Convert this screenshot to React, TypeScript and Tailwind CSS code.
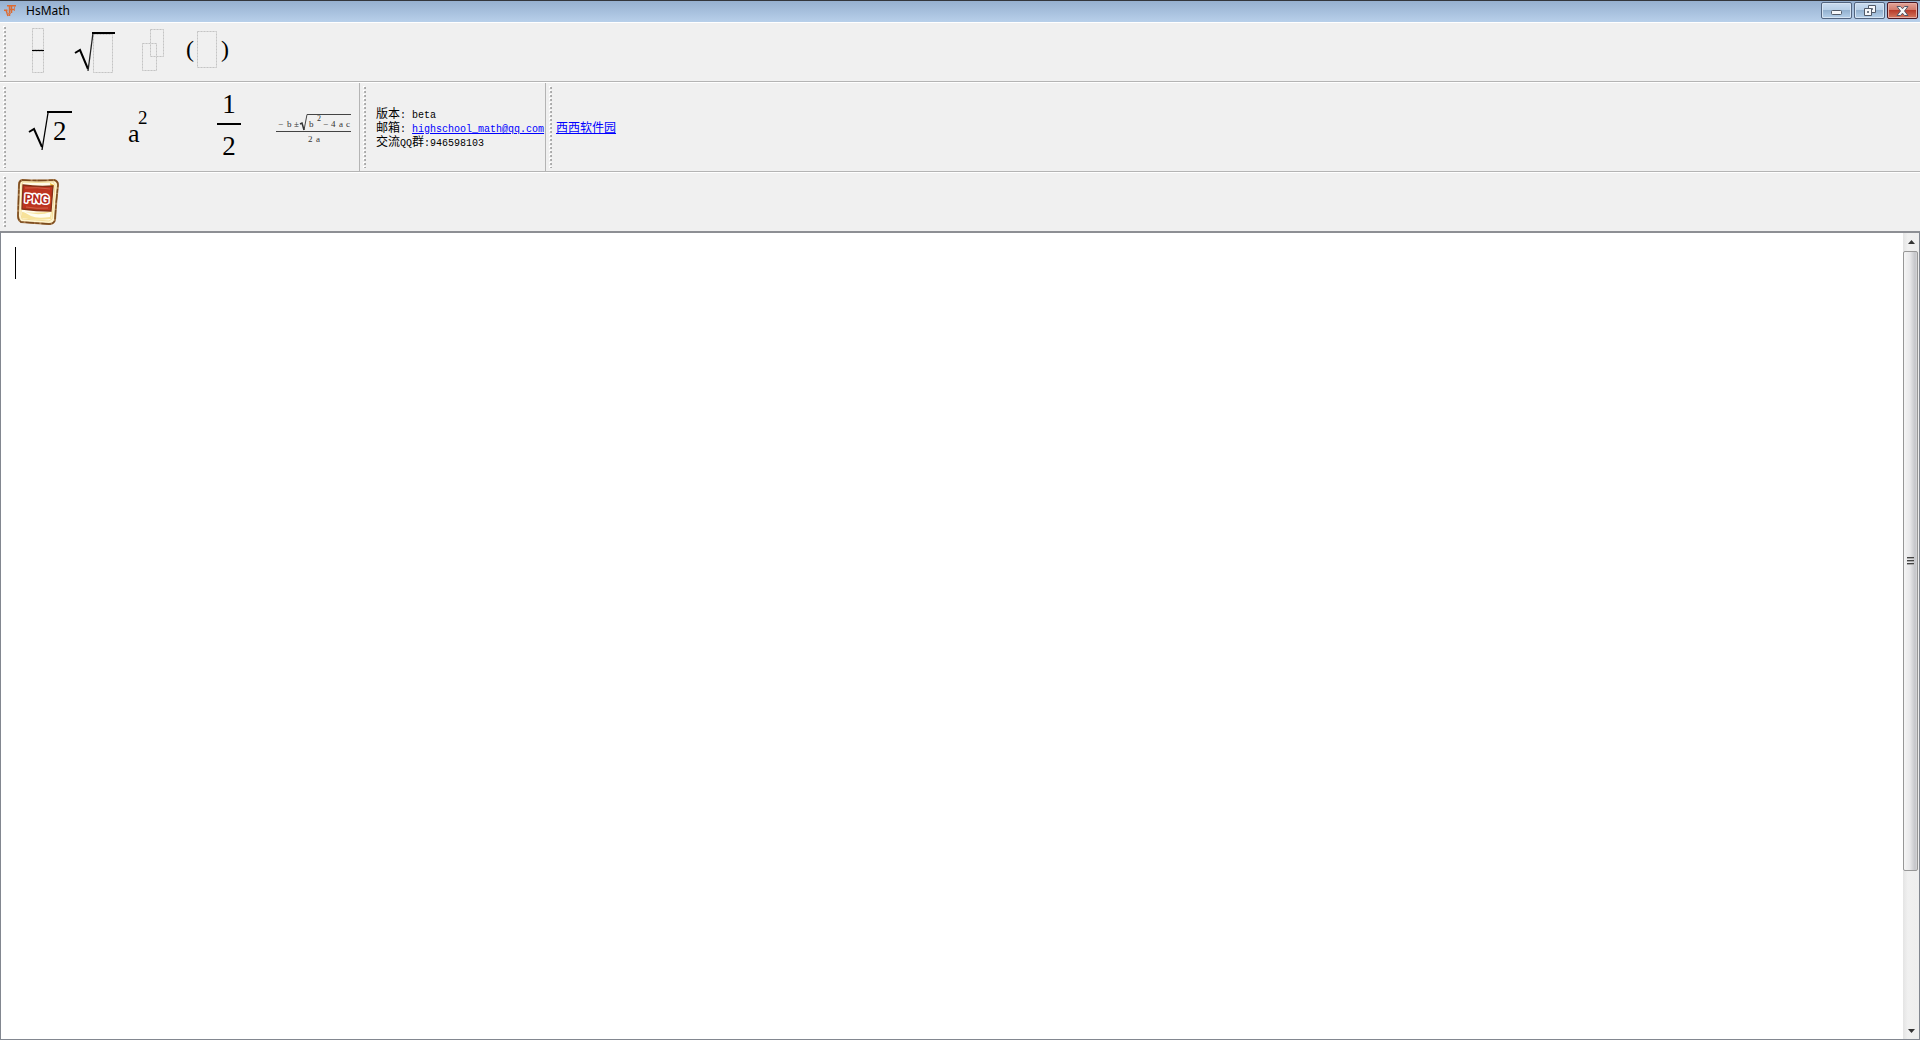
import type { ReactNode } from "react";

function Grip() {
  return (
    <div className="flex shrink-0 self-stretch py-[3px] pl-[3px]" aria-hidden="true">
      <span className="w-px bg-[repeating-linear-gradient(to_bottom,#fff_0_2px,transparent_2px_4px)]" />
      <span className="w-px bg-[repeating-linear-gradient(to_bottom,#fff_0_1px,#b4b4b4_1px_3px,transparent_3px_4px)]" />
      <span className="w-px bg-[repeating-linear-gradient(to_bottom,transparent_0_1px,#a9a9a9_1px_3px,transparent_3px_4px)]" />
    </div>
  );
}

function ToolButton({ label, className, children }: { label: string; className: string; children: ReactNode }) {
  return (
    <button type="button" aria-label={label} title={label} className={`flex shrink-0 items-center justify-center ${className}`}>
      {children}
    </button>
  );
}

function Slot({ x, y, w, h }: { x: number; y: number; w: number; h: number }) {
  return (
    <g fill="none">
      <rect x={x + 0.5} y={y + 0.5} width={w} height={h} stroke="#e6e6e6" />
      <rect x={x + 0.5} y={y + 0.5} width={w} height={h} stroke="#c4c4c4" strokeDasharray="2 1" />
    </g>
  );
}

const serif = "font-['Liberation_Serif',serif]";

function TitleBar() {
  const frame = "flex h-[17px] w-[31px] items-center justify-center rounded-xs border";
  const pale =
    "border-[#52647f] bg-[linear-gradient(to_bottom,#cadcf0_0,#b7cfe7_45%,#93b1cf_50%,#b5d0ea_100%)] shadow-[inset_0_0_0_1px_#d5e4f3]";
  return (
    <header className="flex h-[23px] shrink-0 items-start border-t border-b border-t-[#33363c] border-b-white bg-[linear-gradient(to_bottom,#96b0d0,#b8d0ea)] pr-[2px]">
      <div className="flex h-5 items-center gap-[10px] pl-1">
        <svg width="12" height="12" viewBox="0 0 12 12" fill="none" stroke="#dc6b32" aria-hidden="true">
          <path d="M3 .8h9M0 5.200h3.500M5 4.500h6" strokeWidth="1.600" />
          <path d="M2 5l2 6M5.500 1v10M7.500 1v7" strokeWidth="1.500" />
          <path d="M10.500 1v5M3 8.500h4" stroke="#d08060" />
        </svg>
        <h1 className="font-['Noto_Sans',sans-serif] text-[12px] leading-5 text-black">HsMath</h1>
      </div>
      <div className="ml-auto flex gap-[2px] pt-px">
        <button type="button" aria-label="Minimize" className={`${frame} ${pale}`}>
          <svg width="12" height="11" viewBox="0 0 12 11">
            <rect x="0.5" y="5.5" width="10" height="4" rx="1" fill="#f5f7fa" stroke="#515a68" />
          </svg>
        </button>
        <button type="button" aria-label="Restore" className={`${frame} ${pale}`}>
          <svg width="12" height="11" viewBox="0 0 12 11" stroke="#515a68">
            <path fillRule="evenodd" d="M4.500 .5h7v7h-7zM7.500 3.500h1v1h-1z" fill="#f5f7fa" />
            <path fillRule="evenodd" d="M.5 3.500h7v7h-7zM3.500 6.500h1v1h-1z" fill="#f5f7fa" />
          </svg>
        </button>
        <button
          type="button"
          aria-label="Close"
          className={`${frame} border-[#4c1722] bg-[linear-gradient(to_bottom,#e3a499_0,#d17b6c_45%,#b83c2b_50%,#d4785f_100%)] shadow-[inset_0_0_0_1px_#e6aea4]`}
        >
          <svg width="13" height="10" viewBox="0 0 13 10">
            <path d="M1 .5h3.500l2 2.300 2-2.300H12L8.500 5 12 9.500H8.500l-2-2.300-2 2.300H1L4.500 5z" fill="#f7f7f7" stroke="#535666" strokeLinejoin="round" />
          </svg>
        </button>
      </div>
    </header>
  );
}

function TemplateBar() {
  return (
    <div role="toolbar" aria-label="Templates" className="flex h-[59px] shrink-0 border-b border-[#b4b4b4]">
      <Grip />
      <div className="flex items-center gap-2 pb-[2px] pl-[9px]">
        <ToolButton label="Fraction" className="h-12 w-12">
          <svg width="48" height="48">
            <Slot x={17} y={1} w={11} h={21} />
            <Slot x={17} y={24} w={11} h={21} />
            <path d="M17 23.500h12" stroke="#000" />
          </svg>
        </ToolButton>
        <ToolButton label="Square root" className="h-12 w-12">
          <svg width="48" height="48">
            <Slot x={22} y={7} w={19} h={38} />
            <path d="M4 26l5-3 8 19" fill="none" stroke="#000" strokeWidth="2" />
            <path d="M17 44l5-38" fill="none" stroke="#222" strokeWidth="1.300" />
            <path d="M21 6h23" stroke="#000" strokeWidth="2" />
          </svg>
        </ToolButton>
        <ToolButton label="Superscript" className="h-12 w-12">
          <svg width="48" height="48">
            <Slot x={23} y={2} w={13} h={27} />
            <Slot x={15} y={16} w={14} h={27} />
          </svg>
        </ToolButton>
        <ToolButton label="Parentheses" className="h-12 w-12">
          <svg width="48" height="48" className={serif}>
            <Slot x={14} y={4} w={19} h={36} />
            <text x="3" y="30" fontSize="24">(</text>
            <text x="38" y="30" fontSize="24">)</text>
          </svg>
        </ToolButton>
      </div>
    </div>
  );
}

function Examples() {
  return (
    <div role="toolbar" aria-label="Examples" className="flex w-[360px] border-r border-[#b4b4b4]">
      <Grip />
      <div className="flex items-center gap-2 pb-[2px] pl-[5px]">
        <ToolButton label="Root of 2" className="h-20 w-20">
          <svg width="80" height="80" className={serif}>
            <path d="M18 46l5-3 8 18" fill="none" stroke="#000" strokeWidth="2" />
            <path d="M31 64l6-37" stroke="#000" strokeWidth="1.300" />
            <path d="M36 26h25" stroke="#000" strokeWidth="2" />
            <text x="42" y="54" fontSize="27">2</text>
          </svg>
        </ToolButton>
        <ToolButton label="a squared" className="h-20 w-20">
          <svg width="80" height="80" className={serif}>
            <text x="29" y="56" fontSize="26">a</text>
            <text x="39" y="38" fontSize="19">2</text>
          </svg>
        </ToolButton>
        <ToolButton label="One half" className="h-20 w-20">
          <svg width="80" height="80" className={serif}>
            <text x="42" y="27" fontSize="27" textAnchor="middle">1</text>
            <path d="M30 38h24" stroke="#000" strokeWidth="2" />
            <text x="42" y="69" fontSize="27" textAnchor="middle">2</text>
          </svg>
        </ToolButton>
        <ToolButton label="Quadratic formula" className="h-20 w-20">
          <svg width="80" height="80" className={serif} fill="#333">
            <g fontSize="9">
              <text x="3" y="41">−</text>
              <text x="12" y="41">b</text>
              <text x="19" y="41">±</text>
              <text x="34" y="41">b</text>
              <text x="42" y="35" fontSize="8">2</text>
              <text x="48" y="41">−</text>
              <text x="56" y="41">4</text>
              <text x="64" y="41">a</text>
              <text x="71" y="41">c</text>
              <text x="33" y="56">2</text>
              <text x="41" y="56">a</text>
            </g>
            <path d="M32 28.500h44M1 45.500h75M29 44l3-15.500" fill="none" stroke="#444" />
            <path d="M25 38l2-1 2 7" fill="none" stroke="#333" strokeWidth="1.500" />
          </svg>
        </ToolButton>
      </div>
    </div>
  );
}

const cjk = "font-['Noto_Sans_CJK_SC',sans-serif] text-[12px]";
const link = "text-[#0000ff] underline";

function InfoPanel() {
  return (
    <div className="flex w-[186px] items-center border-r border-[#b4b4b4]">
      <Grip />
      <div className="pl-[10px] font-['Liberation_Mono',monospace] text-[10px] whitespace-pre text-black *:h-[14px] *:leading-[14px]">
        <p>
          <span className={cjk}>版本</span>: beta
        </p>
        <p>
          <span className={cjk}>邮箱</span>:{" "}
          <a href="mailto:highschool_math@qq.com" className={link}>highschool_math@qq.com</a>
        </p>
        <p>
          <span className={cjk}>交流</span>QQ<span className={cjk}>群</span>:946598103
        </p>
      </div>
    </div>
  );
}

function PngIcon() {
  return (
    <svg width="42" height="48" viewBox="0 0 42 48">
      <path d="M5 2Q20 3 37 2Q41 3 41 7Q39 24 38 42Q37 46 32 46Q17 45 4 44Q1 42 1 38L2 7Q2 3 5 2z" fill="#fff5cf" stroke="#a97c4c" strokeWidth="2" />
      <path d="M5 2Q20 3 37 2Q41 3 41 7Q39 24 38 42Q37 46 32 46Q17 45 4 44Q1 42 1 38L2 7Q2 3 5 2z" fill="none" stroke="#7a4a1e" strokeWidth="1.300" strokeDasharray="9 2 4 1" />
      <path d="M6 4Q21 5 36 4L38 7L35 41L32 43Q18 42 5 41L4 36L5 6z" fill="#fffbe8" stroke="#f3dc9a" />
      <path d="M5 34Q20 36 35 33L34 41Q19 43 5 40z" fill="#f7e29a" />
      <path d="M5 33Q20 39 34 34L33 39Q20 41 14 38z" fill="#fffdf1" />
      <path d="M33 5l4 2-2 8z" fill="#f2bf36" />
      <path d="M6 7Q20 9 36 8L34 33Q19 33 5 31z" fill="#bd3420" stroke="#843116" strokeWidth="1.300" />
      <path d="M8 10Q20 9 33 11M9 29q11 2 22 1" fill="none" stroke="#cf6348" />
      <text x="20" y="25" textAnchor="middle" fontSize="12" fontWeight="700" className="font-['Roboto',sans-serif]" fill="#b5281b" stroke="#fff" strokeWidth="3" strokeLinejoin="round" paintOrder="stroke" transform="rotate(3 20 20)">
        PNG
      </text>
    </svg>
  );
}

function Editor() {
  return (
    <main className="relative flex min-h-0 flex-1 border border-t-2 border-[#828790] border-t-[#8d8f94] bg-white">
      <textarea aria-label="Formula editor" className="min-w-0 flex-1 resize-none bg-white p-3 text-3xl outline-none" />
      <span className="absolute top-[14px] left-[14px] h-8 w-px bg-black" />
      <div className="flex w-4 flex-col bg-[linear-gradient(to_right,#e4e4e4,#f0f0f0_30%,#eeeeee)]">
        <button type="button" aria-label="Scroll up" className="flex h-[17px] shrink-0 items-center justify-center">
          <svg width="7" height="4"><path d="M0 4L3.500 0 7 4z" fill="#333" /></svg>
        </button>
        <div className="min-h-0 flex-1 pt-px">
          <div className="flex h-[81%] max-h-[620px] w-[15px] flex-col items-center justify-center gap-px rounded-xs border border-[#979797] bg-[linear-gradient(to_right,#f5f5f5,#e8e8ea_45%,#c4c5c9_85%,#d5d5d8)]">
            <span className="h-[2px] w-[7px] border-t border-[#444] bg-[#aaa]" />
            <span className="h-[2px] w-[7px] border-t border-[#444] bg-[#aaa]" />
            <span className="h-[2px] w-[7px] border-t border-[#444] bg-[#aaa]" />
          </div>
        </div>
        <button type="button" aria-label="Scroll down" className="flex h-[17px] shrink-0 items-center justify-center">
          <svg width="7" height="4"><path d="M0 0h7L3.500 4z" fill="#333" /></svg>
        </button>
      </div>
    </main>
  );
}

export default function App() {
  return (
    <div className="flex h-screen flex-col overflow-hidden bg-[#f0f0f0]">
      <TitleBar />
      <TemplateBar />
      <div className="flex h-[90px] shrink-0 border-t border-b border-t-white border-b-[#b4b4b4]">
        <Examples />
        <InfoPanel />
        <div className="flex items-center">
          <Grip />
          <a href="#xixi" className={`pl-1 leading-[14px] ${cjk} ${link}`}>西西软件园</a>
        </div>
      </div>
      <div role="toolbar" aria-label="Export" className="flex h-[59px] shrink-0 border-t border-white">
        <Grip />
        <div className="flex items-center pb-px pl-[11px]">
          <ToolButton label="Export PNG" className="h-12 w-[42px]">
            <PngIcon />
          </ToolButton>
        </div>
      </div>
      <Editor />
    </div>
  );
}
